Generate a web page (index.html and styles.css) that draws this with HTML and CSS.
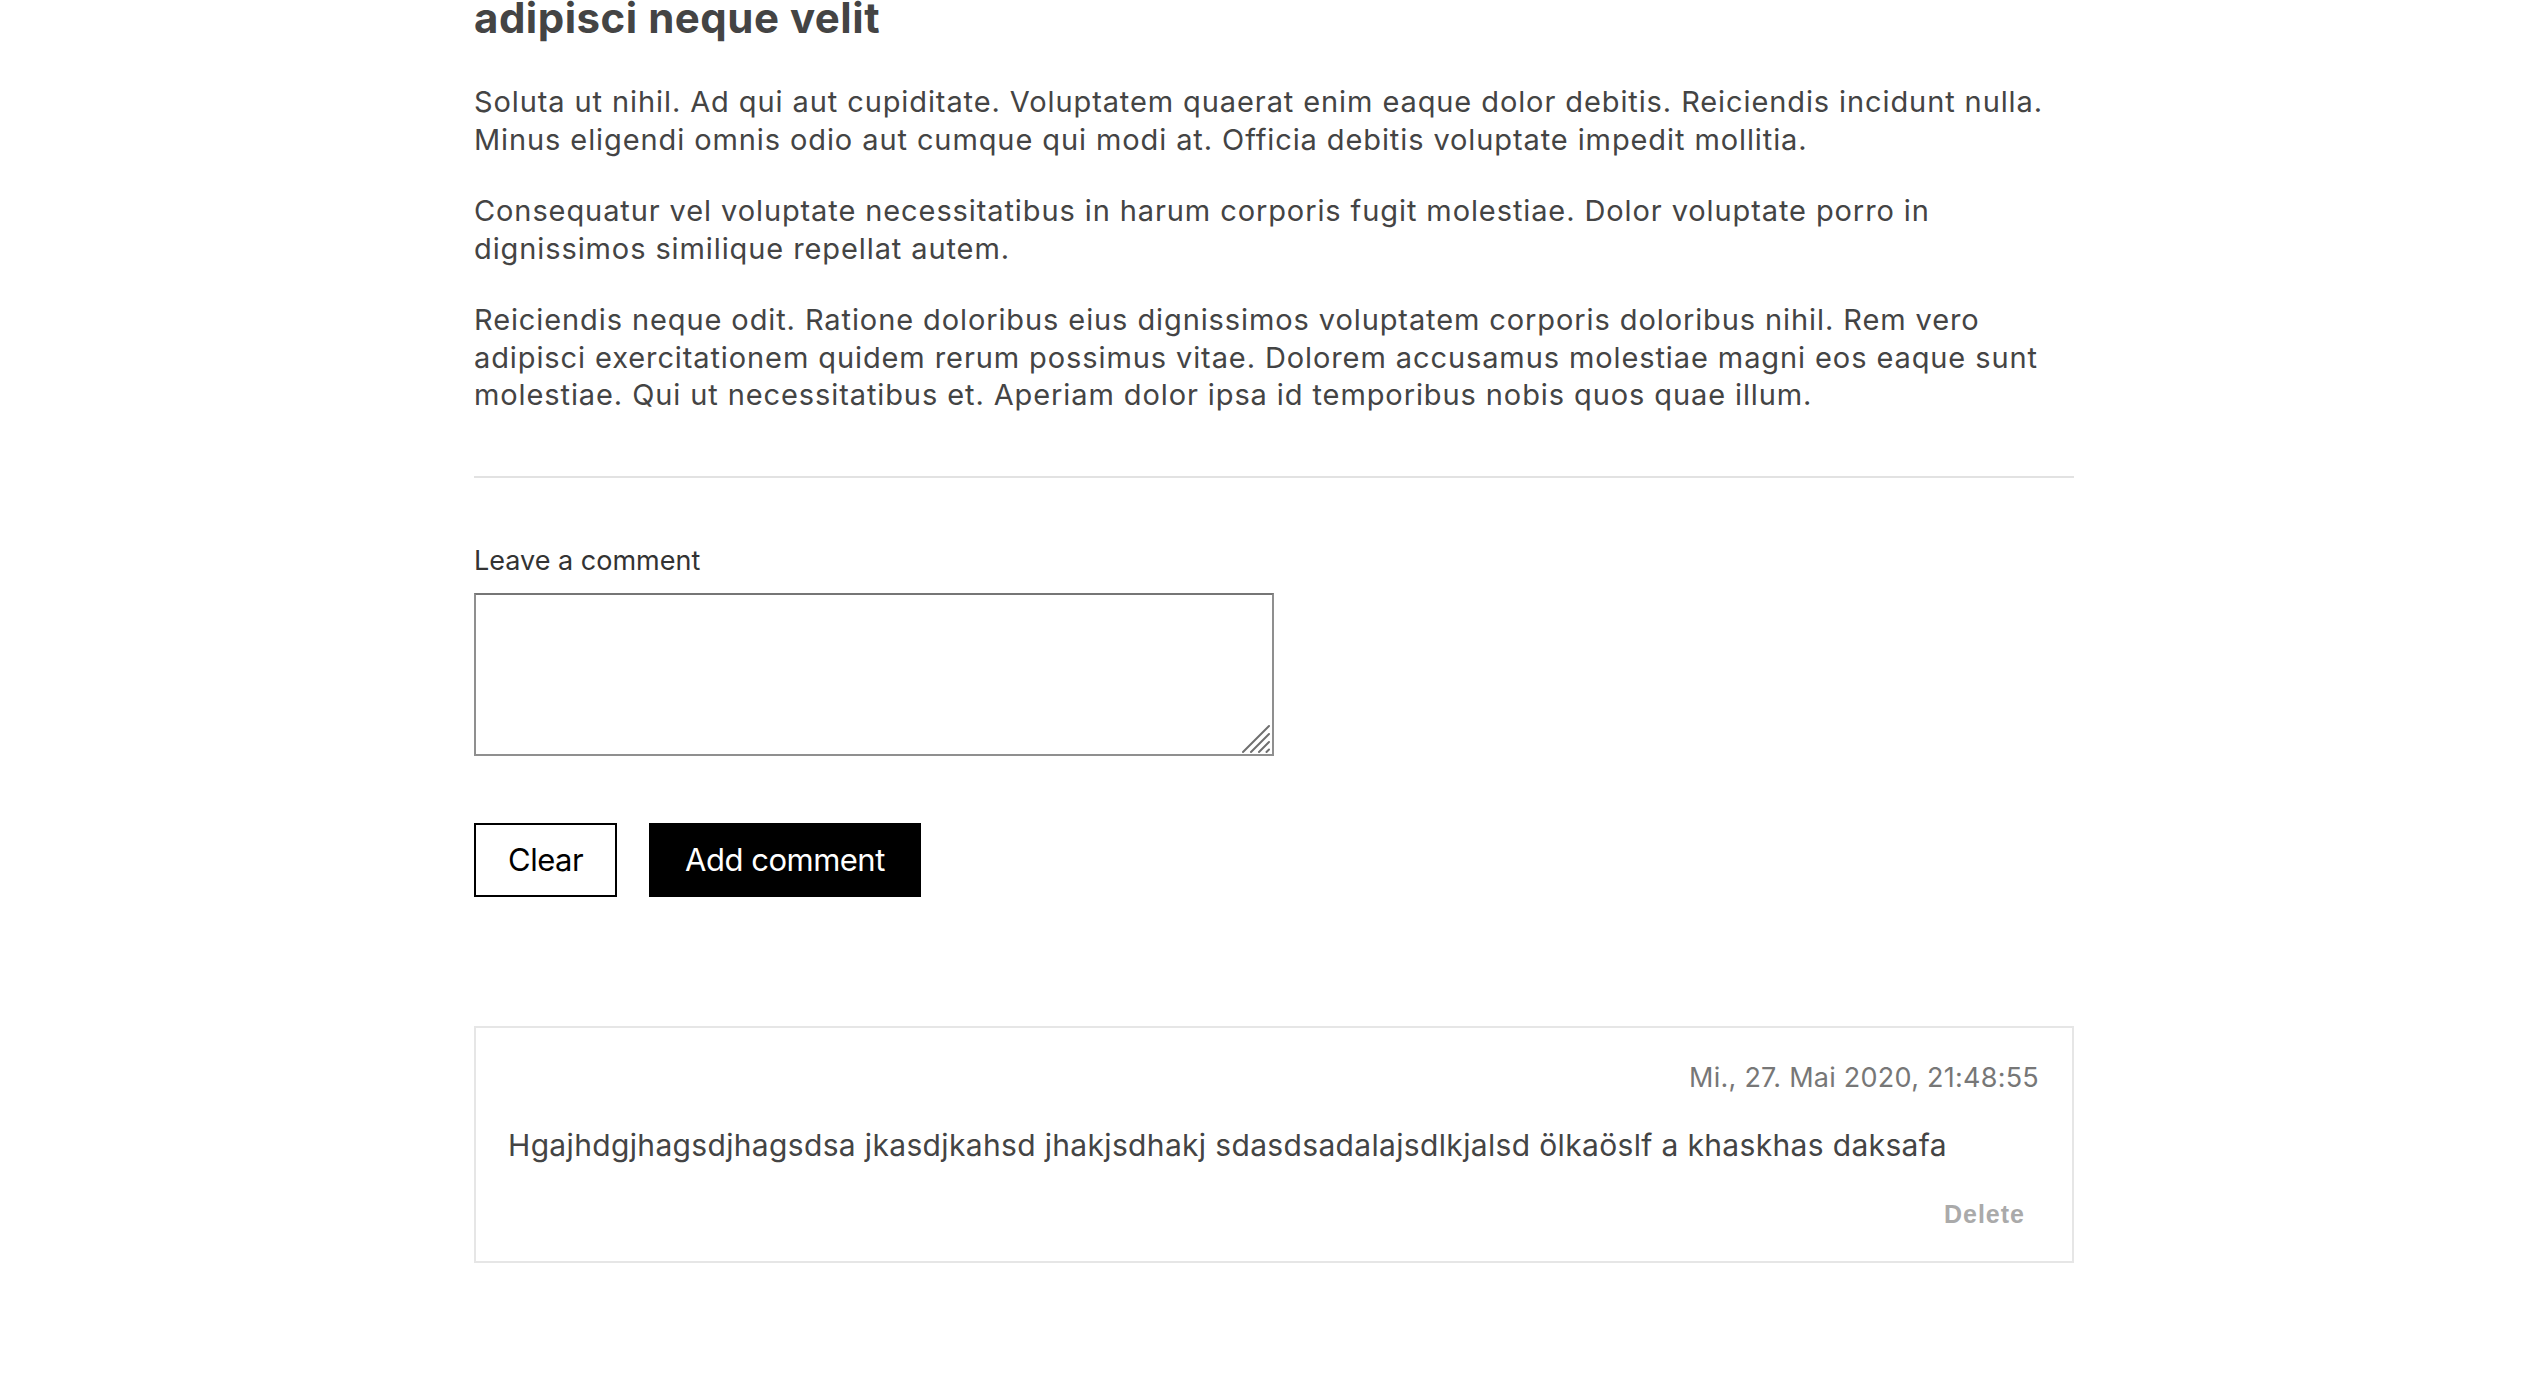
FILE: index.html
```html
<!DOCTYPE html>
<html lang="en">
<head>
<meta charset="utf-8">
<title>Article</title>
<link rel="stylesheet" href="styles.css">
</head>
<body>
<main class="article">
  <h1 class="title">adipisci neque velit</h1>
  <p class="para">Soluta ut nihil. Ad qui aut cupiditate. Voluptatem quaerat enim eaque dolor debitis. Reiciendis incidunt nulla. Minus eligendi omnis odio aut cumque qui modi at. Officia debitis voluptate impedit mollitia.</p>
  <p class="para">Consequatur vel voluptate necessitatibus in harum corporis fugit molestiae. Dolor voluptate porro in dignissimos similique repellat autem.</p>
  <p class="para">Reiciendis neque odit. Ratione doloribus eius dignissimos voluptatem corporis doloribus nihil. Rem vero adipisci exercitationem quidem rerum possimus vitae. Dolorem accusamus molestiae magni eos eaque sunt molestiae. Qui ut necessitatibus et. Aperiam dolor ipsa id temporibus nobis quos quae illum.</p>
  <hr class="divider">
  <form class="comment-form">
    <label class="label" for="comment">Leave a comment</label>
    <div class="textarea-wrap">
      <textarea class="textarea" id="comment"></textarea>
      <svg class="grip" width="30" height="30" viewBox="0 0 30 30" aria-hidden="true">
        <path d="M1 28 L27 2 M9 28 L27 10 M17 28 L27 18 M24.5 28 L27 25.5" stroke="#6f6f6f" stroke-width="2" stroke-linecap="round" fill="none"/>
      </svg>
    </div>
    <div class="actions">
      <button type="button" class="btn btn-outline">Clear</button>
      <button type="button" class="btn btn-solid">Add comment</button>
    </div>
  </form>
  <ul class="comments">
    <li class="comment">
      <div class="comment-date">Mi., 27. Mai 2020, 21:48:55</div>
      <p class="comment-text">Hgajhdgjhagsdjhagsdsa jkasdjkahsd jhakjsdhakj sdasdsadalajsdlkjalsd ölkaöslf a khaskhas daksafa</p>
      <div class="comment-actions"><button type="button" class="delete">Delete</button></div>
    </li>
  </ul>
</main>
</body>
</html>
```
FILE: styles.css
```css
html, body {
  margin: 0;
  padding: 0;
  background: #ffffff;
}
body {
  font-family: Inter, "Noto Sans", sans-serif;
  color: #444444;
}
.article {
  width: 1600px;
  margin: 0 auto;
  padding-bottom: 120px;
}
.title {
  margin: -7px 0 40px;
  font-size: 42px;
  line-height: 50px;
  font-weight: 700;
  letter-spacing: 0.5px;
  color: #444444;
}
.para {
  margin: 0 0 34px;
  font-size: 29px;
  line-height: 37.5px;
  letter-spacing: 0.9px;
}
.divider {
  margin: 62px 0 0;
  border: 0;
  height: 2px;
  background: #e2e2e2;
}
.comment-form {
  display: flex;
  flex-direction: column;
  align-items: flex-start;
  padding-top: 64px;
}
.label {
  font-size: 27px;
  line-height: 37.5px;
  color: #333333;
}
.textarea-wrap {
  position: relative;
  margin-top: 14px;
  width: 800px;
  height: 163px;
}
.textarea {
  display: block;
  box-sizing: border-box;
  width: 800px;
  height: 163px;
  margin: 0;
  border: 2px solid #8f8f8f;
  border-top-color: #767676;
  border-radius: 0;
  padding: 4px;
  font-family: inherit;
  font-size: 24px;
  resize: none;
  outline: none;
}
.grip {
  position: absolute;
  right: 2px;
  bottom: 2px;
  pointer-events: none;
}
.actions {
  display: flex;
  gap: 32px;
  margin-top: 67px;
}
.btn {
  font-family: Inter, "Noto Sans", sans-serif;
  font-size: 31px;
  letter-spacing: -0.5px;
  line-height: 38px;
  padding: 16px 32px;
  border: 2px solid #000000;
  border-radius: 0;
  cursor: pointer;
}
.btn-outline {
  background: #ffffff;
  color: #000000;
}
.btn-solid {
  background: #000000;
  color: #ffffff;
  padding: 16px 34px;
}
.comments {
  list-style: none;
  margin: 129px 0 0;
  padding: 0;
}
.comment {
  border: 2px solid #e6e6e6;
  padding: 31px 33px 29px 32px;
}
.comment-date {
  text-align: right;
  font-size: 27px;
  line-height: 37.5px;
  letter-spacing: 0.25px;
  color: #777777;
}
.comment-text {
  margin: 28px 0 0;
  font-size: 30px;
  line-height: 40px;
  letter-spacing: 0.34px;
  color: #444444;
}
.comment-actions {
  display: flex;
  justify-content: flex-end;
  margin-top: 31px;
}
.delete {
  font-family: "Liberation Sans", Arial, sans-serif;
  font-weight: 700;
  font-size: 25px;
  letter-spacing: 1px;
  line-height: 28px;
  color: #aaaaaa;
  background: transparent;
  border: 0;
  padding: 4px 14px;
  cursor: pointer;
}
```
